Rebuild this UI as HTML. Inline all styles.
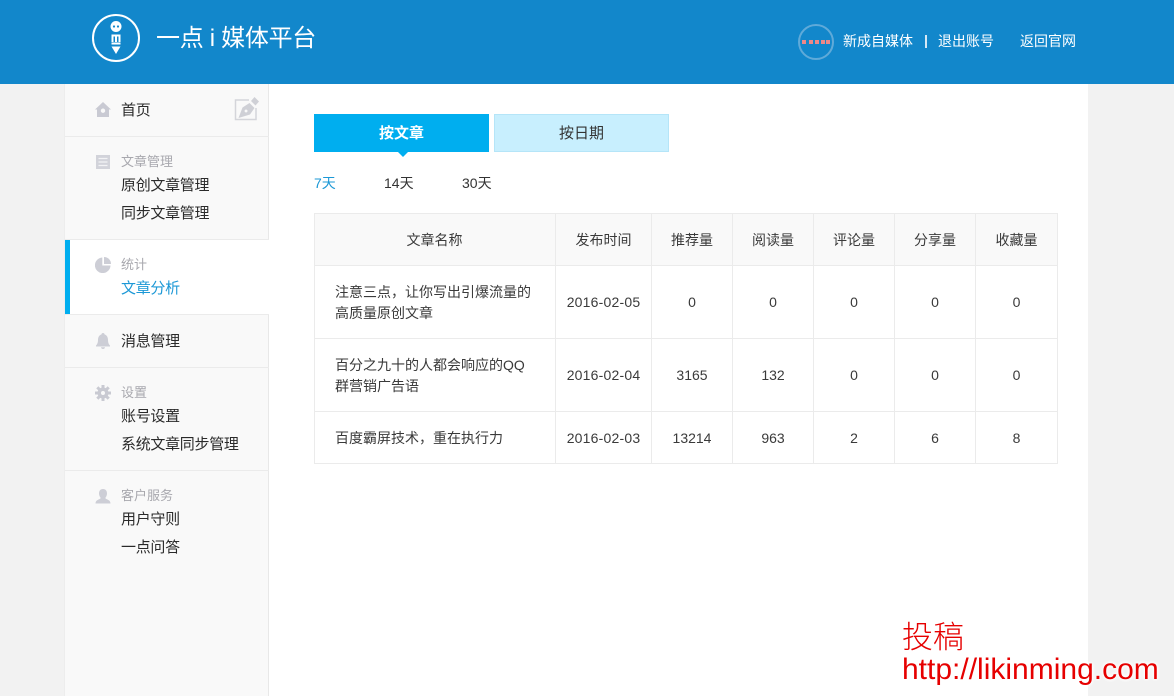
<!DOCTYPE html>
<html>
<head>
<meta charset="utf-8">
<style>
html,body{margin:0;padding:0;width:1174px;height:696px;overflow:hidden;background:#f2f2f2;font-family:"Liberation Sans","Noto Sans CJK SC",sans-serif;color:#333}
div,span,svg{position:absolute;white-space:nowrap}
.t{line-height:20px}
.m{font-size:15px;color:#2a2a2a;letter-spacing:-.3px}
.l{font-size:13px;color:#a8a8ae}
.b{background:#ebebeb}
.c{font-size:14px;color:#3a3a3a;text-align:center;line-height:20px}
</style>
</head>
<body>
<div style="left:0;top:0;width:1174px;height:84px;background:#1287cb"></div>
<svg style="left:92px;top:14px" width="48" height="48" viewBox="0 0 48 48">
<circle cx="24" cy="24" r="23" fill="none" stroke="#fff" stroke-width="2"/>
<circle cx="24" cy="12.500" r="5.500" fill="#fff"/>
<circle cx="22" cy="12.500" r="1.100" fill="#1287cb"/><circle cx="26" cy="12.500" r="1.100" fill="#1287cb"/>
<path d="M19.500 28V20.500H28.500V28H26.500V22.500H25V28H23V22.500H21.500V28Z" fill="#fff"/>
<rect x="19.500" y="28.500" width="9" height="2" fill="#fff"/>
<path d="M19.500 32.500H28.500L24 40Z" fill="#fff"/>
</svg>
<div class="t" style="left:156px;top:25px;font-size:24px;line-height:28px;color:#fff;letter-spacing:-.3px">一点 i 媒体平台</div>
<svg style="left:797px;top:23px" width="38" height="38"><circle cx="19" cy="19" r="17" fill="#1287cb" stroke="#5faad9" stroke-width="2"/><rect x="5" y="17" width="4" height="4" fill="#e88"/><rect x="12" y="17" width="4" height="4" fill="#e88"/><rect x="18" y="17" width="4" height="4" fill="#e88"/><rect x="24" y="17" width="4" height="4" fill="#e88"/><rect x="29" y="17" width="4" height="4" fill="#e88"/></svg>
<div class="t" style="left:843px;top:31px;font-size:14px;color:#fff">新成自媒体</div>
<div style="left:925px;top:35px;width:2px;height:13px;background:#d5e8f5"></div>
<div class="t" style="left:938px;top:31px;font-size:14px;color:#fff">退出账号</div>
<div class="t" style="left:1020px;top:31px;font-size:14px;color:#fff">返回官网</div>

<div style="left:65px;top:84px;width:1023px;height:612px;background:#fff"></div>
<div style="left:64px;top:84px;width:205px;height:612px;background:#f9f9f9;border-left:1px solid #ededed;border-right:1px solid #e8e8e8;box-sizing:border-box"></div>
<div style="left:65px;top:239px;width:204px;height:76px;background:#fff"></div>
<div style="left:65px;top:239px;width:5px;height:76px;background:#00aeef"></div>
<div class="b" style="left:65px;top:136px;width:204px;height:1px"></div>
<div class="b" style="left:65px;top:239px;width:204px;height:1px"></div>
<div class="b" style="left:65px;top:314px;width:204px;height:1px"></div>
<div class="b" style="left:65px;top:367px;width:204px;height:1px"></div>
<div class="b" style="left:65px;top:470px;width:204px;height:1px"></div>

<svg style="left:95px;top:102px" width="16" height="16"><path d="M8 0L16 7.500H14V15H2V7.500H0ZM8 6.500A2.200 2.200 0 1 0 8 10.900A2.200 2.200 0 1 0 8 6.500Z" fill="#c9cad3" fill-rule="evenodd"/></svg>
<svg style="left:234px;top:96px" width="26" height="26"><path d="M15 4H1.500V23.500H22V12" fill="none" stroke="#d4d5da" stroke-width="1.500"/><path d="M4.500 22L8.500 11.500L15.500 7L20.500 12L16 18.500ZM12 13.500A1.500 1.500 0 1 0 12.100 13.500Z" fill="#cfd0d6" fill-rule="evenodd"/><path d="M17 5L20.500 1L25 5.500L21.500 9.500Z" fill="#cfd0d6"/></svg>
<div class="t m" style="left:121px;top:101px">首页</div>

<svg style="left:96px;top:155px" width="14" height="14"><rect width="14" height="14" fill="#d2d3da"/><path d="M2.500 3.500H11.500M2.500 7H11.500M2.500 10.500H11.500" stroke="#f3f3f5" stroke-width="1.300"/></svg>
<div class="t l" style="left:121px;top:152px">文章管理</div>
<div class="t m" style="left:121px;top:176px">原创文章管理</div>
<div class="t m" style="left:121px;top:204px">同步文章管理</div>

<svg style="left:95px;top:257px" width="16" height="16"><path d="M7.300 .5V8.500H15.500A7.800 7.800 0 1 1 7.300 .5Z" fill="#cdced6"/><path d="M9 0A7 7 0 0 1 16 7H9Z" fill="#cdced6"/></svg>
<div class="t l" style="left:121px;top:255px">统计</div>
<div class="t m" style="left:121px;top:279px;color:#1c98d6">文章分析</div>

<svg style="left:95px;top:333px" width="16" height="16"><path d="M8 0C9 0 9.500 .6 9.500 1.400C12 2.200 13 4.500 13 7C13 10 14 11.500 15 12.500V13.500H1V12.500C2 11.500 3 10 3 7C3 4.500 4 2.200 6.500 1.400C6.500 .6 7 0 8 0ZM6 14.300H10C10 15.400 9 16 8 16S6 15.400 6 14.300Z" fill="#cdced6"/></svg>
<div class="t m" style="left:121px;top:332px">消息管理</div>

<svg style="left:95px;top:385px" width="16" height="16"><path d="M8 2.500A5.500 5.500 0 1 0 8 13.500A5.500 5.500 0 1 0 8 2.500ZM8 6A2 2 0 1 1 8 10A2 2 0 1 1 8 6Z" fill="#c9cad2" fill-rule="evenodd"/><path d="M8 0V3M8 13V16M0 8H3M13 8H16M2.300 2.300L4.500 4.500M11.500 11.500L13.700 13.700M13.700 2.300L11.500 4.500M4.500 11.500L2.300 13.700" stroke="#c9cad2" stroke-width="3"/></svg>
<div class="t l" style="left:121px;top:383px">设置</div>
<div class="t m" style="left:121px;top:407px">账号设置</div>
<div class="t m" style="left:121px;top:435px">系统文章同步管理</div>

<svg style="left:95px;top:488px" width="16" height="16"><path d="M8 1C10.800 1 12 3 12 5.500C12 7.500 11 9 10.500 9.500V10.500C12 11.500 15.500 12 15.500 15.500H.5C.5 12 4 11.500 5.500 10.500V9.500C5 9 4 7.500 4 5.500C4 3 5.200 1 8 1Z" fill="#cdced6"/></svg>
<div class="t l" style="left:121px;top:486px">客户服务</div>
<div class="t m" style="left:121px;top:510px">用户守则</div>
<div class="t m" style="left:121px;top:538px">一点问答</div>

<div style="left:314px;top:114px;width:175px;height:38px;background:#00aeef;color:#fff;font-size:15px;line-height:40px;text-align:center;font-weight:bold">按文章</div>
<div style="left:398px;top:152px;width:0;height:0;border-left:5px solid transparent;border-right:5px solid transparent;border-top:5px solid #00aeef"></div>
<div style="left:494px;top:114px;width:175px;height:38px;box-sizing:border-box;background:#c8effe;border:1px solid #b5e5f8;color:#333;font-size:15px;line-height:38px;text-align:center">按日期</div>
<div class="t" style="left:314px;top:173px;font-size:14px;color:#1c98d6">7天</div>
<div class="t" style="left:384px;top:173px;font-size:14px;color:#333">14天</div>
<div class="t" style="left:462px;top:173px;font-size:14px;color:#333">30天</div>

<div style="left:314px;top:213px;width:744px;height:52px;background:#f9f9f9"></div>
<div class="b" style="left:314px;top:213px;width:744px;height:1px"></div>
<div class="b" style="left:314px;top:265px;width:744px;height:1px"></div>
<div class="b" style="left:314px;top:338px;width:744px;height:1px"></div>
<div class="b" style="left:314px;top:411px;width:744px;height:1px"></div>
<div class="b" style="left:314px;top:463px;width:744px;height:1px"></div>
<div class="b" style="left:314px;top:213px;width:1px;height:251px"></div>
<div class="b" style="left:555px;top:213px;width:1px;height:251px"></div>
<div class="b" style="left:651px;top:213px;width:1px;height:251px"></div>
<div class="b" style="left:732px;top:213px;width:1px;height:251px"></div>
<div class="b" style="left:813px;top:213px;width:1px;height:251px"></div>
<div class="b" style="left:894px;top:213px;width:1px;height:251px"></div>
<div class="b" style="left:975px;top:213px;width:1px;height:251px"></div>
<div class="b" style="left:1057px;top:213px;width:1px;height:251px"></div>

<div class="c" style="left:314px;width:241px;top:230px">文章名称</div>
<div class="c" style="left:556px;width:95px;top:230px">发布时间</div>
<div class="c" style="left:652px;width:80px;top:230px">推荐量</div>
<div class="c" style="left:733px;width:80px;top:230px">阅读量</div>
<div class="c" style="left:814px;width:80px;top:230px">评论量</div>
<div class="c" style="left:895px;width:80px;top:230px">分享量</div>
<div class="c" style="left:976px;width:81px;top:230px">收藏量</div>

<div class="c" style="left:335px;top:282px;text-align:left;line-height:21px">注意三点，让你写出引爆流量的<br>高质量原创文章</div>
<div class="c" style="left:335px;top:355px;text-align:left;line-height:21px">百分之九十的人都会响应的QQ<br>群营销广告语</div>
<div class="c" style="left:335px;top:428px;text-align:left">百度霸屏技术，重在执行力</div>

<div class="c" style="left:556px;width:95px;top:292px;letter-spacing:.2px">2016-02-05</div>
<div class="c" style="left:652px;width:80px;top:292px">0</div>
<div class="c" style="left:733px;width:80px;top:292px">0</div>
<div class="c" style="left:814px;width:80px;top:292px">0</div>
<div class="c" style="left:895px;width:80px;top:292px">0</div>
<div class="c" style="left:976px;width:81px;top:292px">0</div>

<div class="c" style="left:556px;width:95px;top:365px;letter-spacing:.2px">2016-02-04</div>
<div class="c" style="left:652px;width:80px;top:365px">3165</div>
<div class="c" style="left:733px;width:80px;top:365px">132</div>
<div class="c" style="left:814px;width:80px;top:365px">0</div>
<div class="c" style="left:895px;width:80px;top:365px">0</div>
<div class="c" style="left:976px;width:81px;top:365px">0</div>

<div class="c" style="left:556px;width:95px;top:428px;letter-spacing:.2px">2016-02-03</div>
<div class="c" style="left:652px;width:80px;top:428px">13214</div>
<div class="c" style="left:733px;width:80px;top:428px">963</div>
<div class="c" style="left:814px;width:80px;top:428px">2</div>
<div class="c" style="left:895px;width:80px;top:428px">6</div>
<div class="c" style="left:976px;width:81px;top:428px">8</div>

<div style="left:902px;top:616px;font-size:31px;line-height:38px;color:#e60000;font-family:'Noto Sans CJK SC',sans-serif;font-weight:300;text-shadow:0 0 4px #fff,0 0 4px #fff">投稿</div>
<div style="left:902px;top:652px;font-size:30px;line-height:36px;color:#e60000;text-shadow:0 0 4px #fff,0 0 4px #fff,0 0 4px #fff">http://likinming.com</div>
</body>
</html>
